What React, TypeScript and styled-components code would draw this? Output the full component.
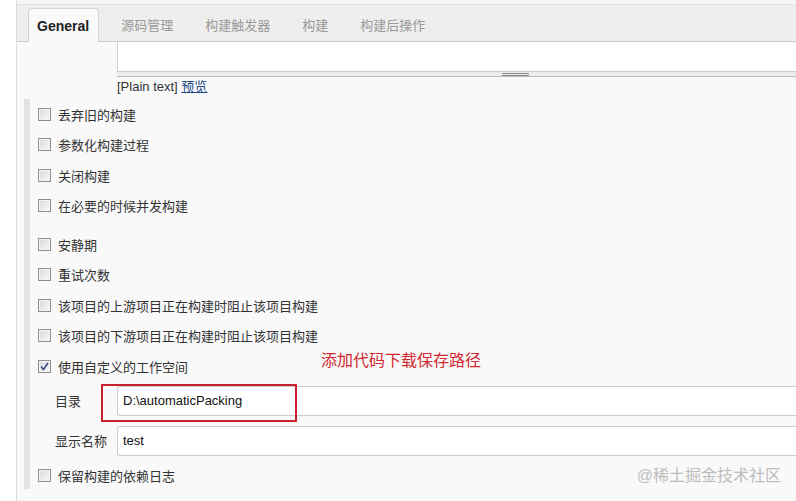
import styled, { createGlobalStyle } from "styled-components";

const GlobalStyle = createGlobalStyle`
    html, body {
        margin: 0;
        padding: 0;
        background: #ffffff;
        overflow: hidden;
    }
    body {
        font-family: "Liberation Sans", "Noto Sans CJK SC", sans-serif;
        font-size: 13px;
        color: #333;
    }
`;

const Page = styled.div`
    display: flex;
    width: 796px;
    height: 501px;
`;

const Gutter = styled.div`
    width: 16px;
    background: #ffffff;
`;

const Main = styled.div`
    position: relative;
    flex: 1;
    border-left: 1px solid #dcdcdc;
    background: #f9f9f9;
    display: flex;
    flex-direction: column;
`;

const TopStrip = styled.div`
    height: 4px;
    background: #f7f7f7;
    border-bottom: 1px solid #e2e2e2;
`;

const TabBar = styled.div`
    display: flex;
    align-items: flex-end;
    height: 36px;
    padding-left: 11px;
    background: #eeeeee;
    border-bottom: 1px solid #cccccc;
`;

const Tab = styled.div<{ $active?: boolean }>`
    display: flex;
    align-items: center;
    height: ${(p) => (p.$active ? "33px" : "34px")};
    padding: ${(p) => (p.$active ? "0 9px 0 8px" : "0 16px")};
    margin-right: ${(p) => (p.$active ? "6px" : "0")};
    margin-bottom: ${(p) => (p.$active ? "-1px" : "0")};
    background: ${(p) => (p.$active ? "#f9f9f9" : "transparent")};
    border: ${(p) => (p.$active ? "1px solid #d4d4d4" : "none")};
    border-bottom: none;
    border-radius: 4px 4px 0 0;
    font-size: ${(p) => (p.$active ? "14px" : "13px")};
    font-weight: ${(p) => (p.$active ? "bold" : "normal")};
    color: ${(p) => (p.$active ? "#222" : "#999")};
`;

const Description = styled.div`
    padding-left: 100px;
`;

const TextArea = styled.div`
    height: 29px;
    background: #ffffff;
    border-left: 1px solid #cfcfcf;
`;

const ResizeBar = styled.div`
    display: flex;
    justify-content: center;
    align-items: center;
    height: 4px;
    background: #ececec;
    border-top: 1px solid #cccccc;
    border-bottom: 1px solid #bdbdbd;
    padding-left: 118px;
`;

const Grip = styled.div`
    width: 27px;
    height: 1px;
    border-top: 1px solid #8a8a8a;
    border-bottom: 1px solid #8a8a8a;
`;

const PlainText = styled.div`
    margin-top: 2px;
    line-height: 16px;
    color: #333;
`;

const Link = styled.a`
    color: #204a87;
    text-decoration: underline;
`;

const Section = styled.div`
    margin: 4px 0 0 7px;
    border-left: 6px solid #e3e3e3;
    padding-left: 8px;
    height: 390px;
`;

const CheckRow = styled.div<{ $gap?: number }>`
    display: flex;
    align-items: center;
    height: 30.5px;
    margin-top: ${(p) => p.$gap ?? 0}px;
`;

const Box = styled.span`
    display: inline-flex;
    align-items: center;
    justify-content: center;
    box-sizing: border-box;
    width: 13px;
    height: 13px;
    margin-right: 7px;
    border: 1px solid #8f8f8f;
    background: linear-gradient(135deg, #d6d6d6, #fbfbfb);
    box-shadow: inset 0 0 0 1px #f4f4f4;
`;

const Label = styled.span`
    color: #333;
    font-size: 13px;
`;

const FieldRow = styled.div<{ $gap: number }>`
    position: relative;
    display: flex;
    align-items: center;
    height: 30px;
    margin-top: ${(p) => p.$gap}px;
    padding-left: 17px;
`;

const FieldLabel = styled.span`
    width: 62px;
    color: #333;
`;

const Input = styled.div`
    flex: 1;
    box-sizing: border-box;
    height: 100%;
    display: flex;
    align-items: center;
    padding-left: 5px;
    background: #ffffff;
    border: 1px solid #cccccc;
    border-right: none;
    border-radius: 3px 0 0 3px;
    color: #111;
`;

const Highlight = styled.div`
    position: absolute;
    left: 63px;
    top: -2px;
    width: 196px;
    height: 38px;
    box-sizing: border-box;
    border: 2px solid #c8232c;
`;

const Note = styled.div`
    position: absolute;
    left: 283px;
    top: -35px;
    font-size: 16px;
    line-height: 20px;
    color: #d0282e;
    white-space: nowrap;
`;

const Watermark = styled.div`
    position: absolute;
    right: 15px;
    bottom: 15px;
    font-size: 16px;
    color: #bdbdbd;
`;

function Check({ checked }: { checked?: boolean }) {
    return (
        <Box>
            {checked && (
                <svg width="9" height="9" viewBox="0 0 9 9">
                    <path d="M1 4.5 L3.5 7.5 L8 1" fill="none" stroke="#3b4a8f" strokeWidth="1.6" />
                </svg>
            )}
        </Box>
    );
}

const tabs = ["源码管理", "构建触发器", "构建", "构建后操作"];

export default function App() {
    return (
        <>
            <GlobalStyle />
            <Page>
                <Gutter />
                <Main>
                    <TopStrip />
                    <TabBar>
                        <Tab $active>General</Tab>
                        {tabs.map((t) => (
                            <Tab key={t}>{t}</Tab>
                        ))}
                    </TabBar>
                    <Description>
                        <TextArea />
                        <ResizeBar>
                            <Grip />
                        </ResizeBar>
                        <PlainText>
                            [Plain text] <Link>预览</Link>
                        </PlainText>
                    </Description>
                    <Section>
                        <CheckRow><Check /><Label>丢弃旧的构建</Label></CheckRow>
                        <CheckRow><Check /><Label>参数化构建过程</Label></CheckRow>
                        <CheckRow><Check /><Label>关闭构建</Label></CheckRow>
                        <CheckRow><Check /><Label>在必要的时候并发构建</Label></CheckRow>
                        <CheckRow $gap={8}><Check /><Label>安静期</Label></CheckRow>
                        <CheckRow><Check /><Label>重试次数</Label></CheckRow>
                        <CheckRow><Check /><Label>该项目的上游项目正在构建时阻止该项目构建</Label></CheckRow>
                        <CheckRow><Check /><Label>该项目的下游项目正在构建时阻止该项目构建</Label></CheckRow>
                        <CheckRow><Check checked /><Label>使用自定义的工作空间</Label></CheckRow>
                        <FieldRow $gap={4}>
                            <FieldLabel>目录</FieldLabel>
                            <Input>D:\automaticPacking</Input>
                            <Highlight />
                            <Note>添加代码下载保存路径</Note>
                        </FieldRow>
                        <FieldRow $gap={10}>
                            <FieldLabel>显示名称</FieldLabel>
                            <Input>test</Input>
                        </FieldRow>
                        <CheckRow $gap={5}><Check /><Label>保留构建的依赖日志</Label></CheckRow>
                    </Section>
                    <Watermark>@稀土掘金技术社区</Watermark>
                </Main>
            </Page>
        </>
    );
}
